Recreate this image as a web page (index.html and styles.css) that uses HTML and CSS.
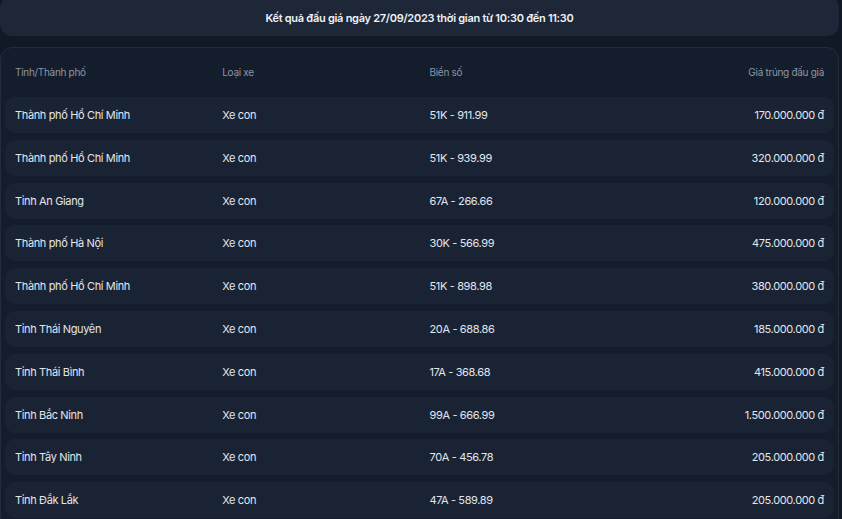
FILE: index.html
```html
<!DOCTYPE html>
<html lang="vi">
<head>
<meta charset="utf-8">
<title>Kết quả đấu giá</title>
<link rel="stylesheet" href="styles.css">
</head>
<body>
<div class="page">
  <div class="banner">Kết quả đấu giá ngày 27/09/2023 thời gian từ 10:30 đến 11:30</div>
  <div class="panel">
    <div class="head">
      <div class="cell">Tỉnh/Thành phố</div>
      <div class="cell">Loại xe</div>
      <div class="cell">Biển số</div>
      <div class="cell right">Giá trúng đấu giá</div>
    </div>
    <div class="rows">
      <div class="row"><div class="cell">Thành phố Hồ Chí Minh</div><div class="cell">Xe con</div><div class="cell">51K - 911.99</div><div class="cell right">170.000.000 đ</div></div>
      <div class="row"><div class="cell">Thành phố Hồ Chí Minh</div><div class="cell">Xe con</div><div class="cell">51K - 939.99</div><div class="cell right">320.000.000 đ</div></div>
      <div class="row"><div class="cell">Tỉnh An Giang</div><div class="cell">Xe con</div><div class="cell">67A - 266.66</div><div class="cell right">120.000.000 đ</div></div>
      <div class="row"><div class="cell">Thành phố Hà Nội</div><div class="cell">Xe con</div><div class="cell">30K - 566.99</div><div class="cell right">475.000.000 đ</div></div>
      <div class="row"><div class="cell">Thành phố Hồ Chí Minh</div><div class="cell">Xe con</div><div class="cell">51K - 898.98</div><div class="cell right">380.000.000 đ</div></div>
      <div class="row"><div class="cell">Tỉnh Thái Nguyên</div><div class="cell">Xe con</div><div class="cell">20A - 688.86</div><div class="cell right">185.000.000 đ</div></div>
      <div class="row"><div class="cell">Tỉnh Thái Bình</div><div class="cell">Xe con</div><div class="cell">17A - 368.68</div><div class="cell right">415.000.000 đ</div></div>
      <div class="row"><div class="cell">Tỉnh Bắc Ninh</div><div class="cell">Xe con</div><div class="cell">99A - 666.99</div><div class="cell right">1.500.000.000 đ</div></div>
      <div class="row"><div class="cell">Tỉnh Tây Ninh</div><div class="cell">Xe con</div><div class="cell">70A - 456.78</div><div class="cell right">205.000.000 đ</div></div>
      <div class="row"><div class="cell">Tỉnh Đắk Lắk</div><div class="cell">Xe con</div><div class="cell">47A - 589.89</div><div class="cell right">205.000.000 đ</div></div>
    </div>
  </div>
</div>
</body>
</html>
```
FILE: styles.css
```css
html, body {
  margin: 0;
  padding: 0;
  background: #111927;
  font-family: Inter, "Noto Sans", sans-serif;
  color: #e2e6ec;
  overflow: hidden;
}
.page {
  width: 839px;
  display: flex;
  flex-direction: column;
  gap: 11px;
}
.banner {
  height: 40px;
  margin-top: -4px;
  padding-top: 4px;
  box-sizing: border-box;
  background: #1d2738;
  border-radius: 12px;
  display: flex;
  align-items: center;
  justify-content: center;
  font-size: 11px;
  font-weight: 600;
  letter-spacing: -0.28px;
  color: #eef1f5;
}
.panel {
  background: #141d2b;
  border: 1px solid #222c3c;
  border-radius: 12px;
  padding: 12px 4px;
}
.head {
  display: grid;
  grid-template-columns: repeat(4, 1fr);
  height: 24px;
  align-items: center;
  font-size: 10px;
  letter-spacing: -0.3px;
  color: #8c96a6;
  margin-bottom: 13px;
}
.rows {
  display: flex;
  flex-direction: column;
  gap: 6.8px;
}
.row {
  display: grid;
  grid-template-columns: repeat(4, 1fr);
  height: 36px;
  align-items: center;
  background: #1a2334;
  border-radius: 10px;
  font-size: 11px;
  letter-spacing: -0.36px;
}
.cell {
  padding: 0 10px;
  white-space: nowrap;
}
.right {
  text-align: right;
}
```
